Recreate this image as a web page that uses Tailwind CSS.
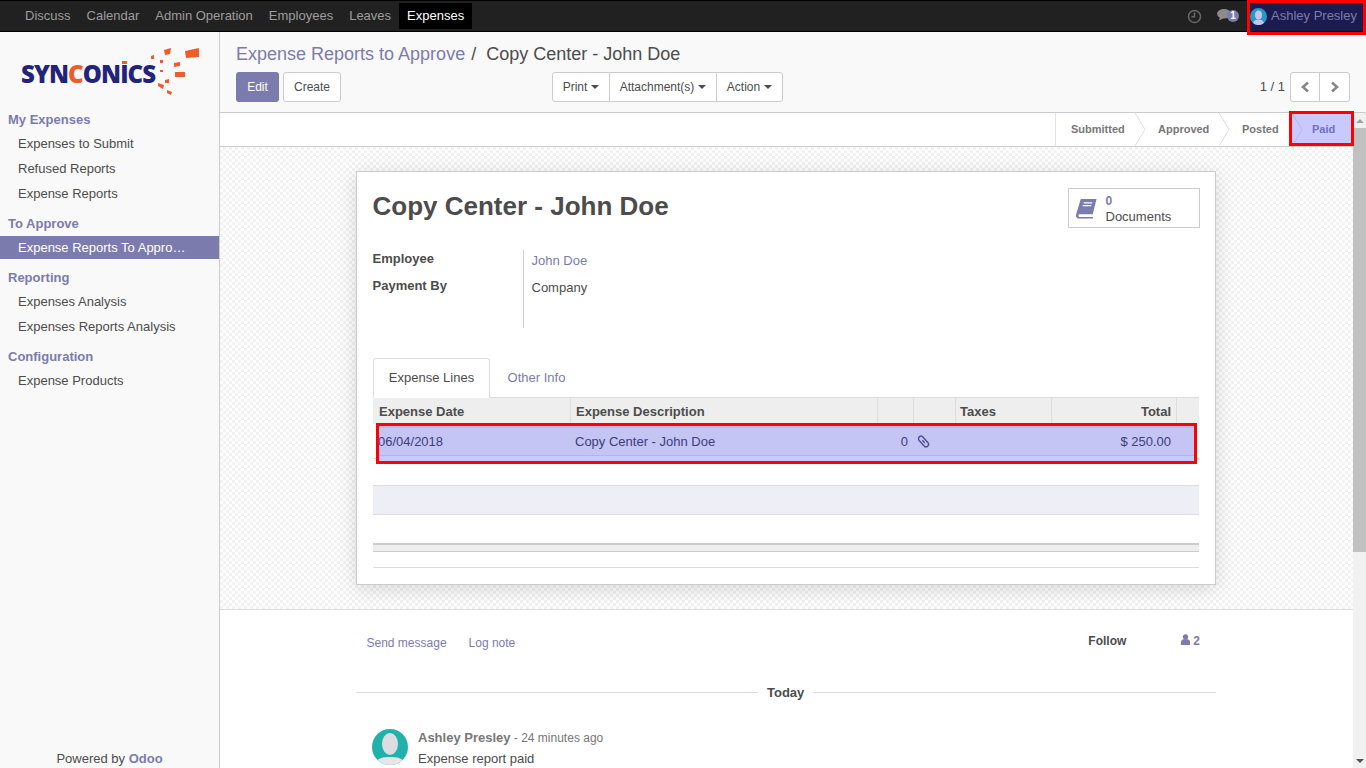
<!DOCTYPE html>
<html lang="en">
<head>
  <meta charset="utf-8">
  <meta name="viewport" content="width=device-width, initial-scale=1">
  <title>Expense Reports to Approve</title>
  <script src="https://cdn.jsdelivr.net/npm/@tailwindcss/browser@4"></script>
</head>
<body class="h-screen w-[1366px] overflow-hidden flex flex-col bg-white font-['Liberation_Sans',Arial,sans-serif] text-[13px] text-[#4c4c4c]">

  <!-- top navbar -->
  <nav class="h-[32px] shrink-0 flex items-center bg-[#212121] border-y border-black pl-[17px] text-[#9d9d9d] relative z-20">
    <a class="px-2 leading-[26px]">Discuss</a>
    <a class="px-2 leading-[26px]">Calendar</a>
    <a class="px-2 leading-[26px]">Admin Operation</a>
    <a class="px-2 leading-[26px]">Employees</a>
    <a class="px-2 leading-[26px]">Leaves</a>
    <a class="px-2 leading-[26px] bg-black text-white">Expenses</a>

    <svg class="ml-auto" width="15" height="15" viewBox="0 0 15 15" fill="none" stroke="#666" stroke-width="1.600">
      <circle cx="7.500" cy="7.500" r="6"/><path d="M7.500 3.500v4.300H4.400"/>
    </svg>
    <div class="relative ml-[15px] mr-[8px] w-[22px] h-[16px]">
      <svg width="16" height="12" viewBox="0 0 16 12" fill="#8c8c8c" class="mt-[1px]">
        <ellipse cx="7" cy="4.800" rx="7" ry="4.800"/><path d="M3 7.500 2 11.500 7 9z"/>
      </svg>
      <span class="absolute left-[10px] top-[2px] w-[12px] h-[12px] rounded-full bg-[#7c7bad] text-white text-[10px] font-bold leading-[12px] text-center">1</span>
    </div>
    <!-- user menu with the red marker -->
    <div class="relative w-[119px] h-[30px] bg-[#1b1b50] flex items-center pl-[3px] text-[#7c7bad]">
      <svg width="17" height="17" viewBox="0 0 17 17" class="shrink-0">
        <circle cx="8.500" cy="8.500" r="8.500" fill="#2a9bc0"/>
        <ellipse cx="8.500" cy="7" rx="3.600" ry="4.600" fill="#c5c5ee"/>
        <path d="M3 15c1-3 3-3.500 5.500-3.500S13 12 14 15a8.500 8.500 0 0 1-11 0z" fill="#c5c5ee"/>
      </svg>
      <span class="ml-[4px]">Ashley Presley</span>
      <div class="absolute left-0 right-0 top-[-1px] h-[35px] border-[3px] border-[#f00]"></div>
    </div>
  </nav>

  <div class="flex-1 flex min-h-0">
    <!-- sidebar -->
    <aside class="w-[220px] shrink-0 flex flex-col bg-[#f9f9f9] border-r border-[#ccc]">
      <div class="h-[75px] shrink-0 relative pl-[21px] pt-[27px]">
        <div class="font-['Open_Sans',sans-serif] font-extrabold text-[24px] leading-[30px] tracking-[-0.9px] text-[#23237a]">SYN<span class="text-[#f15a29]">C</span>ONICS</div>
        <svg class="absolute left-[120px] top-[14px]" width="82" height="50" viewBox="120 46 82 50" fill="#f15a29">
          <path d="M185 51 199 48 199 57 186 58z"/>
          <path d="M164 50 171 48 170 54 165 55z"/>
          <path d="M151 56 154 55 154 59 151 59z"/>
          <path d="M160 60 163 60 163 63 160 63z"/>
          <path d="M174 63 180 62 180 66 174 67z"/>
          <path d="M175 72 185 72 185 77 175 77z"/>
          <path d="M160 70 163 70 163 72 160 72z"/>
          <path d="M165 80 169 79 169 83 165 83z"/>
          <path d="M158 83 164 85 163 89 158 86z"/>
          <path d="M167 90 172 92 171 95 167 93z"/>
          <path d="M122 61 127 61 127 64 122 64z"/>
        </svg>
      </div>
      <h4 class="h-[24px] pl-2 leading-[26px] font-bold text-[#7c7bad]">My Expenses</h4>
      <a class="h-[25px] pl-[18px] leading-[25px]">Expenses to Submit</a>
      <a class="h-[25px] pl-[18px] leading-[25px]">Refused Reports</a>
      <a class="h-[25px] pl-[18px] leading-[25px]">Expense Reports</a>
      <h4 class="h-[24px] mt-[5px] pl-2 leading-[26px] font-bold text-[#7c7bad]">To Approve</h4>
      <a class="h-[23px] my-[1px] pl-[18px] leading-[23px] bg-[#7c7bad] text-white">Expense Reports To Appro…</a>
      <h4 class="h-[24px] mt-[5px] pl-2 leading-[26px] font-bold text-[#7c7bad]">Reporting</h4>
      <a class="h-[25px] pl-[18px] leading-[25px]">Expenses Analysis</a>
      <a class="h-[25px] pl-[18px] leading-[25px]">Expenses Reports Analysis</a>
      <h4 class="h-[24px] mt-[5px] pl-2 leading-[26px] font-bold text-[#7c7bad]">Configuration</h4>
      <a class="h-[25px] pl-[18px] leading-[25px]">Expense Products</a>
      <div class="mt-auto h-[18px] text-center leading-[18px]">Powered by <b class="text-[#7c7bad]">Odoo</b></div>
    </aside>

    <div class="flex-1 flex flex-col min-w-0">
      <!-- control panel -->
      <header class="h-[81px] shrink-0 bg-[#f9f9f9] border-b border-[#ccc] pl-4 pr-4">
        <div class="h-[40px] pt-[10px] text-[18px] leading-[24px]"><span class="text-[#7c7bad]">Expense Reports to Approve</span> <span class="ml-[1px] text-[#4c4c4c]">/</span>&nbsp; <span>Copy Center - John Doe</span></div>
        <div class="flex items-center">
          <div class="w-[316px] flex gap-1">
            <button class="h-[30px] w-[43px] rounded-[3px] bg-[#7c7bad] text-white text-[12px]">Edit</button>
            <button class="h-[30px] w-[58px] rounded-[3px] bg-white border border-[#ccc] text-[12px]">Create</button>
          </div>
          <div class="flex h-[30px] text-[12px] bg-white border border-[#ccc] rounded-[3px]">
            <button class="w-[57px] flex items-center justify-center gap-1 border-r border-[#ccc]">Print <i class="border-x-4 border-t-4 border-x-transparent border-t-[#4c4c4c]"></i></button>
            <button class="w-[107px] flex items-center justify-center gap-1 border-r border-[#ccc]">Attachment(s) <i class="border-x-4 border-t-4 border-x-transparent border-t-[#4c4c4c]"></i></button>
            <button class="w-[65px] flex items-center justify-center gap-1">Action <i class="border-x-4 border-t-4 border-x-transparent border-t-[#4c4c4c]"></i></button>
          </div>
          <span class="ml-auto mr-[5px]">1 / 1</span>
          <div class="flex h-[30px] bg-white border border-[#ccc] rounded-[3px]">
            <button class="w-[29px] flex items-center justify-center border-r border-[#ccc]">
              <svg width="10" height="12" viewBox="0 0 10 12" fill="none" stroke="#888" stroke-width="2.600"><path d="M8 1.500 3 6l5 4.500"/></svg>
            </button>
            <button class="w-[29px] flex items-center justify-center">
              <svg width="10" height="12" viewBox="0 0 10 12" fill="none" stroke="#888" stroke-width="2.600"><path d="M2 1.500 7 6l-5 4.500"/></svg>
            </button>
          </div>
        </div>
      </header>

      <div class="flex-1 flex min-h-0">
        <main class="relative z-10 flex-1 min-w-0">
          <!-- statusbar -->
          <div class="h-[34px] border-b border-[#ccc] flex justify-end text-[11px] font-bold text-[#777]">
            <div class="w-[80px] border-l border-[#e4e4e4] pl-[15px] leading-[33px]">Submitted</div>
            <div class="relative w-[84px] pl-[23px] leading-[33px]">
              <svg class="absolute left-0 top-0" width="11" height="33" fill="none" stroke="#ddd"><path d="M0 0l10 16.500L0 33"/></svg>
              Approved
            </div>
            <div class="relative w-[71px] pl-[23px] leading-[33px]">
              <svg class="absolute left-0 top-0" width="11" height="33" fill="none" stroke="#ddd"><path d="M0 0l10 16.500L0 33"/></svg>
              Posted
            </div>
            <div class="relative w-[63px] pl-[22px] leading-[33px] bg-[#c9c9fb] text-[#6f6ec8]">
              <svg class="absolute left-[2px] top-0" width="11" height="33" fill="none" stroke="#b6b6e8"><path d="M0 0l10 16.500L0 33"/></svg>
              Paid
              <div class="absolute left-[-1px] right-[-1px] top-[-2px] h-[35px] border-[3px] border-[#f00]"></div>
            </div>
          </div>

          <!-- sheet background -->
          <div class="h-[463px] border-b border-[#ddd] pt-[24px] bg-[repeating-conic-gradient(#f2f2f2_0%_25%,#ffffff_0%_50%)] bg-[length:6px_6px]">
            <div class="relative w-[860px] h-[414px] ml-[136px] bg-white border border-[#ccc] shadow-[0_4px_20px_rgba(0,0,0,0.15)] px-4">
              <div class="h-[78px] flex items-start">
                <h1 class="mt-4 ml-[-0.5px] h-[36px] text-[26px] leading-[36px] font-bold">Copy Center - John Doe</h1>
                <div class="ml-auto mt-4 mr-[-1px] w-[132px] h-[40px] border border-[#ccc] flex items-center pl-[6px]">
                  <svg width="23" height="21" viewBox="0 0 24 22" fill="#7c7bad" class="mt-[1px]">
                    <path d="M6 1h16.500l-4 16H4C3 19 4 20 5 20h14l-.5 1.500H4C1.500 21.500.5 19.500 1 17.500z"/>
                    <path d="M9 5h9M8 8h9" stroke="#fff" stroke-width="1.300"/>
                  </svg>
                  <div class="ml-[7.5px] mt-[-1px] leading-[15px]"><b class="block text-[12px] leading-[16px] pt-[1px] text-[#7c7bad]">0</b>Documents</div>
                </div>
              </div>
              <div class="h-[78px] flex">
                <div class="w-[150px] ml-[-0.5px] font-bold">
                  <div class="h-[17px] leading-[17px]">Employee</div>
                  <div class="h-[17px] mt-[10px] leading-[17px]">Payment By</div>
                </div>
                <div class="ml-[0.5px] border-l border-[#ccc] pl-[7.5px] pt-[2px]">
                  <div class="h-[17px] leading-[17px] text-[#7c7bad]">John Doe</div>
                  <div class="h-[17px] mt-[10px] leading-[17px]">Company</div>
                </div>
              </div>
              <!-- tabs -->
              <div class="relative z-10 mt-[30px] h-[39px] flex">
                <div class="w-[117px] h-[40px] bg-white border border-b-0 border-[#ddd] rounded-t-[3px] text-center leading-[38px]">Expense Lines</div>
                <div class="w-[93px] text-center leading-[40px] text-[#7c7bad]">Other Info</div>
              </div>
              <!-- lines table -->
              <div class="grid grid-cols-[198px_307px_36px_42px_96px_125px_22px] h-[27px] bg-[#eee] border-t border-[#ddd] font-bold leading-[27px]">
                <div class="pl-[6px] border-r border-[#ddd]">Expense Date</div>
                <div class="pl-[5px] border-r border-[#ddd]">Expense Description</div>
                <div class="border-r border-[#ddd]"></div>
                <div class="border-r border-[#ddd]"></div>
                <div class="pl-[4px] border-r border-[#ddd]">Taxes</div>
                <div class="pr-[5px] text-right border-r border-[#ddd]">Total</div>
                <div></div>
              </div>
              <div class="relative h-[35px] border-b border-[#ddd] text-[#3d3d7a]">
                <div class="absolute left-[3px] top-[-1px] w-[821px] h-[41px] border-[3px] border-[#f00] bg-[#c9c9fb]">
                  <div class="h-[30px] bg-[#c4c4f5] border-t-2 border-b border-t-[#b9b9ec] border-b-[#b4b4e6]"></div>
                </div>
                <div class="relative grid grid-cols-[198px_307px_36px_42px_96px_125px_22px] h-[34px] leading-[35px]">
                  <div class="pl-[5px]">06/04/2018</div>
                  <div class="pl-[4px]">Copy Center - John Doe</div>
                  <div class="pr-[6px] text-right">0</div>
                  <div class="pl-[3px] flex items-center">
                    <svg width="13" height="13" viewBox="0 0 13 13" fill="none" stroke="#50508f" stroke-width="1.400">
                      <rect x="4" y="0.300" width="5" height="12.400" rx="2.500" transform="rotate(-42 6.500 6.500)"/>
                      <path d="M5.300 5.300l2.600 2.600"/>
                    </svg>
                  </div>
                  <div></div>
                  <div class="pr-[6px] text-right">$ 250.00</div>
                  <div></div>
                </div>
              </div>
              <div class="h-[26px]"></div>
              <div class="h-[30px] bg-[#eeeef6] border-y border-[#ddd]"></div>
              <div class="h-[28px]"></div>
              <div class="h-[9px] bg-[#eee] border-t-2 border-b border-t-[#ccc] border-b-[#ccc]"></div>
              <div class="h-[16px] border-b border-[#ddd]"></div>
            </div>
          </div>

          <!-- chatter -->
          <section class="relative w-[860px] ml-[136px]">
            <div class="flex h-[82px] items-start pt-[25px] text-[12px] leading-[16px] text-[#7c7bad]">
              <a class="ml-[10.5px]">Send message</a>
              <a class="ml-[22px]">Log note</a>
              <b class="ml-auto mt-[-2px] text-[#4c4c4c]">Follow</b>
              <svg class="ml-[55px] mt-[-1px]" width="9" height="11" viewBox="0 0 9 11" fill="#7c7bad"><circle cx="4.500" cy="2.800" r="2.600"/><path d="M0 11V8c0-2 1.500-3 4.500-3S9 6 9 8v3z"/></svg>
              <b class="ml-[3px] mr-[16px] mt-[-2px]">2</b>
            </div>
            <div class="h-[1px] bg-[#ddd] relative">
              <b class="absolute left-[402px] top-[-9px] bg-white px-[9px] leading-[20px] text-[#4c4c4c]">Today</b>
            </div>
            <div class="flex mt-[36px] ml-4">
              <svg width="36" height="36" viewBox="0 0 36 36" class="shrink-0">
                <clipPath id="avatarClip"><circle cx="18" cy="18" r="18"/></clipPath>
                <g clip-path="url(#avatarClip)">
                  <rect width="36" height="36" fill="#20b2aa"/>
                  <ellipse cx="18" cy="15" rx="8" ry="11" fill="#dcdce2"/>
                  <path d="M3 36c1-7 8-8 15-8s14 1 15 8z" fill="#e6e6ea"/>
                </g>
              </svg>
              <div class="ml-[10px] pt-[1px]">
                <div class="text-[12px] leading-[16px] text-[#777]"><b class="text-[13px]">Ashley Presley</b> - 24 minutes ago</div>
                <div class="mt-[5px] leading-[16px]">Expense report paid</div>
              </div>
            </div>
          </section>
        </main>

        <!-- page scrollbar -->
        <div class="w-[13px] shrink-0 flex flex-col bg-[#f1f1f1]">
          <div class="h-[15px] flex items-center justify-center"><i class="border-x-[4px] border-b-[4px] border-x-transparent border-b-[#a3a3a3]"></i></div>
          <div class="h-[424px] bg-[#c1c1c1]"></div>
          <div class="mt-auto h-[15px] flex items-center justify-center"><i class="border-x-[4px] border-t-[4px] border-x-transparent border-t-[#505050]"></i></div>
        </div>
      </div>
    </div>
  </div>
</body>
</html>
